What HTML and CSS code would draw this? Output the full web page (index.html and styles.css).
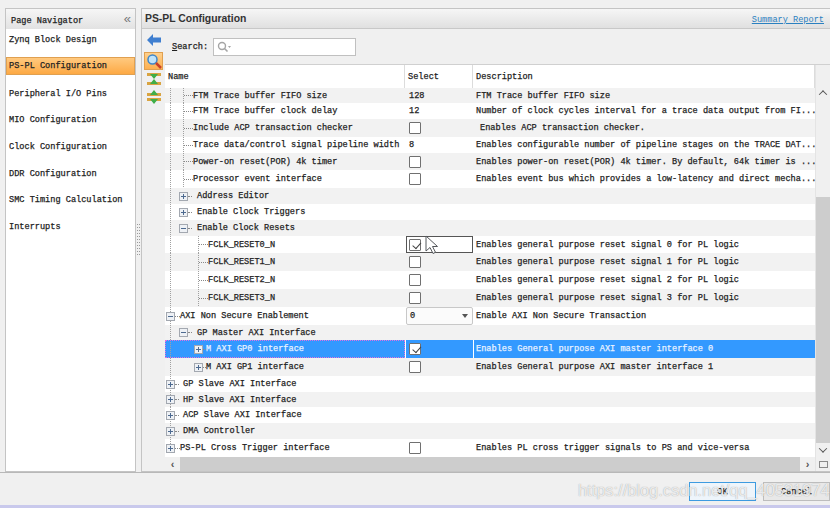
FILE: index.html
```html
<!DOCTYPE html>
<html lang="en">
<head>
  <title>PS-PL Configuration</title>
  <meta charset="UTF-8">
  <link rel="stylesheet" href="styles.css">
</head>
<body>
<svg class="defs" width="0" height="0">
  <symbol id="plus" viewBox="0 0 9 9"><rect x=".5" y=".5" width="8" height="8" fill="#eef1f5" stroke="#a3a8b0"/><path d="M2 4.500h5M4.500 2v5" stroke="#4d6a90"/></symbol>
  <symbol id="minus" viewBox="0 0 9 9"><rect x=".5" y=".5" width="8" height="8" fill="#eef1f5" stroke="#a3a8b0"/><path d="M2 4.500h5" stroke="#4d6a90"/></symbol>
</svg>
<div class="top-strip"></div>
<div class="main">
  <nav class="navigator">
    <div class="nav-head"><span>Page Navigator</span><span class="nav-collapse">&laquo;</span></div>
    <div class="nav-item">Zynq Block Design</div>
    <div class="nav-item active">PS-PL Configuration</div>
    <div class="nav-item">Peripheral I/O Pins</div>
    <div class="nav-item">MIO Configuration</div>
    <div class="nav-item">Clock Configuration</div>
    <div class="nav-item">DDR Configuration</div>
    <div class="nav-item">SMC Timing Calculation</div>
    <div class="nav-item">Interrupts</div>
  </nav>
  <div class="splitter"></div>
  <section class="config">
    <header class="config-head">
      <span class="config-title">PS-PL Configuration</span>
      <a class="summary" href="#">Summary Report</a>
    </header>
    <div class="config-body">
      <aside class="tools">
        <svg width="16" height="14" viewBox="0 0 16 14"><path d="M1 7l6-6v3.500h8v5H7V13z" fill="#3f7fd0"/></svg>
        <span class="tool-on">
          <svg width="16" height="16" viewBox="0 0 16 16"><circle cx="6.500" cy="6.500" r="4.500" fill="#bfe3fa" stroke="#3f86c8" stroke-width="1.500"/><path d="M10 10l5 5" stroke="#c8402a" stroke-width="2.500"/></svg>
        </span>
        <svg width="14" height="14" viewBox="0 0 14 14"><path d="M0 1h14v3H0zM0 10h14v3H0z" fill="#d9a441"/><path d="M3 2h8L7 7zM3 12h8L7 7z" fill="#3fae49"/></svg>
        <svg class="tool-last" width="14" height="14" viewBox="0 0 14 14"><path d="M0 3h14v3H0zM0 8h14v3H0z" fill="#d9a441"/><path d="M7 0l4 5H3zM7 14l4-5H3z" fill="#3fae49"/></svg>
      </aside>
      <div class="content">
        <div class="search-row">
          <label class="search-label"><u>S</u>earch:</label>
          <div class="search-box">
            <svg width="14" height="12" viewBox="0 0 14 12"><circle cx="5" cy="5" r="3.500" fill="none" stroke="#a5a5a5" stroke-width="1.400"/><path d="M7.500 7.500l3 3" stroke="#a5a5a5" stroke-width="1.600"/><path d="M11 5h3l-1.500 2z" fill="#a5a5a5"/></svg>
          </div>
        </div>
        <div class="table-wrap">
          <div class="table">
            <div class="thead">
              <div class="th">Name</div>
              <div class="th">Select</div>
              <div class="th">Description</div>
            </div>
            <div class="tbody">
              <div class="row h15"><div class="name g1 g2 lv2"><i class="stub"></i>FTM Trace buffer FIFO size</div><div class="sel">128</div><div class="desc">FTM Trace buffer FIFO size</div></div>
              <div class="row"><div class="name g1 g2 lv2"><i class="stub"></i>FTM Trace buffer clock delay</div><div class="sel">12</div><div class="desc">Number of clock cycles interval for a trace data output from FI...</div></div>
              <div class="row h18"><div class="name g1 g2 lv2"><i class="stub"></i>Include ACP transaction checker</div><div class="sel"><i class="check"></i></div><div class="desc indent">Enables ACP transaction checker.</div></div>
              <div class="row"><div class="name g1 g2 lv2"><i class="stub"></i>Trace data/control signal pipeline width</div><div class="sel">8</div><div class="desc">Enables configurable number of pipeline stages on the TRACE DAT...</div></div>
              <div class="row h17"><div class="name g1 g2 lv2"><i class="stub"></i>Power-on reset(POR) 4k timer</div><div class="sel"><i class="check"></i></div><div class="desc">Enables power-on reset(POR) 4k timer. By default, 64k timer is ...</div></div>
              <div class="row h18"><div class="name g1 g2 lv2"><i class="stub"></i>Processor event interface</div><div class="sel"><i class="check"></i></div><div class="desc">Enables event bus which provides a low-latency and direct mecha...</div></div>
              <div class="row span"><div class="name g1 lv1"><svg class="tog"><use href="#plus"/></svg><i class="stub short"></i>Address Editor</div><div class="sel"></div><div class="desc"></div></div>
              <div class="row span"><div class="name g1 lv1"><svg class="tog"><use href="#plus"/></svg><i class="stub short"></i>Enable Clock Triggers</div><div class="sel"></div><div class="desc"></div></div>
              <div class="row span"><div class="name g1 lv1"><svg class="tog"><use href="#minus"/></svg><i class="stub short"></i>Enable Clock Resets</div><div class="sel"></div><div class="desc"></div></div>
              <div class="row h17"><div class="name g1 g3 lv3"><i class="stub"></i>FCLK_RESET0_N</div><div class="sel focused"><i class="check on"></i></div><div class="desc">Enables general purpose reset signal 0 for PL logic</div></div>
              <div class="row h18"><div class="name g1 g3 lv3"><i class="stub"></i>FCLK_RESET1_N</div><div class="sel"><i class="check"></i></div><div class="desc">Enables general purpose reset signal 1 for PL logic</div></div>
              <div class="row h18"><div class="name g1 g3 lv3"><i class="stub"></i>FCLK_RESET2_N</div><div class="sel"><i class="check"></i></div><div class="desc">Enables general purpose reset signal 2 for PL logic</div></div>
              <div class="row h18"><div class="name g1 g3 lv3"><i class="stub"></i>FCLK_RESET3_N</div><div class="sel"><i class="check"></i></div><div class="desc">Enables general purpose reset signal 3 for PL logic</div></div>
              <div class="row h18"><div class="name g1 lv0"><svg class="tog"><use href="#minus"/></svg><i class="stub tiny"></i>AXI Non Secure Enablement</div><div class="sel combo"><span>0</span><i class="arrow"></i></div><div class="desc">Enable AXI Non Secure Transaction</div></div>
              <div class="row h15 span"><div class="name g1 lv1"><svg class="tog"><use href="#minus"/></svg><i class="stub short"></i>GP Master AXI Interface</div><div class="sel"></div><div class="desc"></div></div>
              <div class="row h18 selected"><div class="name g1 lv3"><svg class="tog"><use href="#plus"/></svg><i class="stub tiny"></i>M AXI GP0 interface</div><div class="sel"><i class="check on"></i></div><div class="desc">Enables General purpose AXI master interface 0</div></div>
              <div class="row h18"><div class="name g1 lv3"><svg class="tog"><use href="#plus"/></svg><i class="stub tiny"></i>M AXI GP1 interface</div><div class="sel"><i class="check"></i></div><div class="desc">Enables General purpose AXI master interface 1</div></div>
              <div class="row span"><div class="name g1 lv0"><svg class="tog"><use href="#plus"/></svg><i class="stub short"></i>GP Slave AXI Interface</div><div class="sel"></div><div class="desc"></div></div>
              <div class="row h15 span"><div class="name g1 lv0"><svg class="tog"><use href="#plus"/></svg><i class="stub short"></i>HP Slave AXI Interface</div><div class="sel"></div><div class="desc"></div></div>
              <div class="row span"><div class="name g1 lv0"><svg class="tog"><use href="#plus"/></svg><i class="stub short"></i>ACP Slave AXI Interface</div><div class="sel"></div><div class="desc"></div></div>
              <div class="row span"><div class="name g1 lv0"><svg class="tog"><use href="#plus"/></svg><i class="stub short"></i>DMA Controller</div><div class="sel"></div><div class="desc"></div></div>
              <div class="row h18"><div class="name g1-half lv0"><svg class="tog"><use href="#plus"/></svg><i class="stub tiny"></i>PS-PL Cross Trigger interface</div><div class="sel"><i class="check"></i></div><div class="desc">Enables PL cross trigger signals to PS and vice-versa</div></div>
            </div>
            <svg class="cursor" width="14" height="20" viewBox="0 0 14 20"><path d="M1 1v15l4-3.500 3 6 2.500-1.200-3-5.800h5z" fill="#fff" stroke="#55585c"/></svg>
            <div class="hscroll"><span class="sb-btn">&lsaquo;</span><div class="hthumb"></div><span class="sb-btn">&rsaquo;</span></div>
          </div>
          <div class="vscroll">
            <div class="vtop"></div>
            <div class="varrow up"></div>
            <div class="vspace"></div>
            <div class="vthumb"></div>
            <div class="varrow down"></div>
            <div class="corner"><i></i></div>
          </div>
        </div>
      </div>
    </div>
  </section>
</div>
<footer class="footer">
  <button class="btn ok">OK</button>
  <button class="btn">Cancel</button>
</footer>
<div class="bottom-edge"></div>
<div class="watermark">https://blog.csdn.net/qq_40531974</div>
</body>
</html>
```
FILE: styles.css
```css
* {
  box-sizing: border-box;
}
html, body {
  height: 508px;
}
body {
  margin: 0;
  position: relative;
  overflow: hidden;
  display: flex;
  flex-direction: column;
  background: #f0f0f0;
  color: #222;
  font-family: "Liberation Mono", monospace;
  font-size: 8.6px;
  font-weight: 400;
  -webkit-text-stroke: 0.25px #222;
}
.defs {
  position: absolute;
}
.top-strip {
  height: 8px;
  flex: none;
}
.main {
  display: flex;
  height: 464px;
  flex: none;
  padding-left: 5px;
}
.navigator {
  width: 131px;
  border: 1px solid #c4c4c4;
  background: #fff;
}
.nav-head {
  height: 20px;
  display: flex;
  align-items: center;
  justify-content: space-between;
  padding: 3px 4px 0 5px;
  background: linear-gradient(#f6f6f6, #e2e2e2);
}
.nav-collapse {
  font: 13px "Liberation Sans", sans-serif;
  color: #777;
  -webkit-text-stroke: 0;
  margin-top: -4px;
}
.nav-item {
  height: 26.700px;
  padding: 2px 3px 0;
  display: flex;
  align-items: center;
  position: relative;
  top: -3px;
}
.nav-item.active {
  height: 18px;
  margin: 4px 0 4.700px;
  background: linear-gradient(#ffc97f, #fda944);
  border: 1px solid #e0a050;
  padding: 0 2px;
}
.splitter {
  width: 5px;
  margin: 216px 0;
  background: repeating-linear-gradient(#9a9a9a 0 1px, transparent 1px 3px) 1px 0 / 1px 100% no-repeat,
    repeating-linear-gradient(#9a9a9a 0 1px, transparent 1px 3px) 3px 0 / 1px 100% no-repeat;
}
.config {
  flex: 1;
  display: flex;
  flex-direction: column;
  border: 1px solid #c4c4c4;
  border-right: 0;
  min-width: 0;
}
.config-head {
  height: 20px;
  flex: none;
  display: flex;
  align-items: center;
  justify-content: space-between;
  padding: 0 6px 0 3px;
  background: linear-gradient(#f6f6f6, #e0e0e0);
  border-bottom: 1px solid #c8c8c8;
}
.config-title {
  font: bold 10.400px "Liberation Sans", sans-serif;
  -webkit-text-stroke: 0;
  color: #333;
}
.summary {
  color: #2a80c0;
  -webkit-text-stroke: 0;
  text-decoration: underline;
  padding-top: 2px;
}
.config-body {
  flex: 1;
  display: flex;
  min-height: 0;
}
.tools {
  width: 23px;
  flex: none;
  display: flex;
  flex-direction: column;
  align-items: center;
  padding-top: 4px;
}
.tool-on {
  width: 19px;
  height: 18px;
  margin: 5px 0 2px;
  display: flex;
  align-items: center;
  justify-content: center;
  background: linear-gradient(#ffd08c, #fdb050);
  border: 1px solid #e0a050;
}
.tool-last {
  margin-top: 4px;
}
.content {
  flex: 1;
  display: flex;
  flex-direction: column;
  min-width: 0;
}
.search-row {
  height: 36px;
  flex: none;
  display: flex;
  align-items: center;
  gap: 6px;
  padding: 1px 0 0 7px;
  border-bottom: 1px solid #d0d0d0;
}
.search-label {
  width: 35px;
}
.search-box {
  width: 143px;
  height: 18px;
  display: flex;
  align-items: center;
  padding-left: 3px;
  background: #fff;
  border: 1px solid #c0c0c0;
}
.table-wrap {
  flex: 1;
  display: flex;
  min-height: 0;
}
.table {
  width: 650px;
  flex: none;
  display: flex;
  flex-direction: column;
  position: relative;
}
.thead {
  height: 23px;
  flex: none;
  display: grid;
  grid-template-columns: 240px 68px 1fr;
  background: #fff;
}
.th {
  display: flex;
  align-items: center;
  padding: 1px 3px 0;
  border-right: 1px solid #dcdcdc;
}
.tbody {
  flex: none;
  display: flex;
  flex-direction: column;
}
.row {
  height: 16px;
  flex: none;
  display: grid;
  grid-template-columns: 240px 68px 342px;
  background: #fff;
}
.row:nth-child(odd) {
  background: #f2f2f2;
}
.h15 { height: 15px; }
.h17 { height: 17px; }
.h18 { height: 18px; }
.name, .desc, .sel {
  display: flex;
  align-items: center;
  white-space: pre;
  min-width: 0;
}
.name {
  --dots: repeating-linear-gradient(#a0a0a0 0 1px, transparent 1px 2px);
  background-repeat: no-repeat;
}
.g1 {
  background-image: var(--dots);
  background-size: 1px 100%;
  background-position: 5px 0;
}
.g1-half {
  background-image: var(--dots);
  background-size: 1px 50%;
  background-position: 5px 0;
}
.g2 {
  background-image: var(--dots), var(--dots);
  background-size: 1px 100%, 1px 100%;
  background-position: 5px 0, 18px 0;
}
.g3 {
  background-image: var(--dots), var(--dots);
  background-size: 1px 100%, 1px 100%;
  background-position: 5px 0, 33px 0;
}
.lv0 { padding-left: 1px; }
.lv1 { padding-left: 14px; }
.lv2 { padding-left: 19px; }
.lv3 { padding-left: 29px; }
.g3.lv3 { padding-left: 34px; }
.stub {
  width: 9px;
  height: 0;
  flex: none;
  border-top: 1px dotted #888;
}
.stub.short {
  width: 4px;
}
.lv1 .stub.short {
  margin-right: 5px;
}
.lv0 .stub.short {
  margin-right: 4px;
}
.stub.tiny {
  width: 3px;
}
.lv0 .stub.tiny {
  width: 5px;
}
.tog {
  width: 9px;
  height: 9px;
  flex: none;
}
.sel {
  padding-left: 3px;
  margin-left: 1px;
  background: inherit;
}
.desc {
  padding-left: 3px;
}
.desc.indent {
  padding-left: 7px;
}
.check {
  width: 12px;
  height: 12px;
  background: #fff;
  border: 1px solid #707070;
  border-radius: 1px;
  position: relative;
}
.check.on::after {
  content: "";
  position: absolute;
  left: 2px;
  top: 0;
  width: 7px;
  height: 4px;
  border-left: 1.500px solid #444;
  border-bottom: 1.500px solid #444;
  transform: rotate(-48deg) translate(-1px, 2px);
}
.focused {
  border: 1.500px solid #555;
  padding-left: 1.500px;
  background: #fff;
  margin: 0 0 0 1px;
}
.combo {
  margin: 0 0 0 1px;
  padding: 0 4px 0 3px;
  justify-content: space-between;
  background: #fbfbfb;
  border: 1px solid #c8c8c8;
  border-radius: 2px;
}
.arrow {
  width: 0;
  height: 0;
  border: 3.500px solid transparent;
  border-top: 4px solid #555;
  border-bottom: 0;
}
.selected,
.selected:nth-child(odd) {
  background: #fff;
}
.selected .name {
  background-color: #3399ff;
  outline: 1px dotted #e070e0;
  outline-offset: -1px;
  color: #e8f2ff;
  -webkit-text-stroke: 0.25px #e8f2ff;
}
.selected .sel {
  background: #3399ff;
}
.selected .desc {
  background: #3399ff;
  color: #e8f2ff;
  -webkit-text-stroke: 0.25px #e8f2ff;
  margin-left: 1px;
  padding-left: 2px;
}
.cursor {
  position: absolute;
  left: 260px;
  top: 170px;
}
.hscroll {
  height: 14px;
  flex: none;
  display: flex;
  align-items: center;
  background: #f0f0f0;
}
.sb-btn {
  width: 15px;
  flex: none;
  text-align: center;
  font: bold 11px "Liberation Sans", sans-serif;
  color: #555;
  -webkit-text-stroke: 0;
}
.hthumb {
  flex: 1;
  height: 14px;
  background: #cdcdcd;
}
.vscroll {
  flex: 1;
  display: flex;
  flex-direction: column;
  background: #f0f0f0;
  border-left: 1px solid #e4e4e4;
}
.vtop {
  height: 21px;
  flex: none;
}
.varrow {
  height: 14px;
  flex: none;
  display: flex;
  align-items: center;
  justify-content: center;
}
.varrow::after {
  content: "";
  width: 5px;
  height: 5px;
  border-left: 1.500px solid #555;
  border-top: 1.500px solid #555;
  transform: rotate(45deg) translate(1px, 1px);
}
.varrow.down::after {
  transform: rotate(225deg) translate(1px, 1px);
}
.vspace {
  height: 97px;
  flex: none;
}
.vthumb {
  flex: 1;
  background: #cdcdcd;
}
.corner {
  height: 14px;
  flex: none;
  display: flex;
  align-items: center;
  justify-content: center;
}
.corner i {
  width: 9px;
  height: 7px;
  border: 1px solid #8a8a8a;
}
.footer {
  flex: 1;
  display: flex;
  justify-content: flex-end;
  align-items: flex-start;
  gap: 7px;
  padding: 9px 0 0;
  border-top: 1px solid #b8b8b8;
}
.btn {
  width: 67px;
  height: 19px;
  padding: 0;
  font: inherit;
  color: #222;
  background: #e8e8e8;
  border: 1px solid #bdbdbd;
}
.btn.ok {
  border: 1px solid #3d9be0;
  background: #eef5fb;
}
.bottom-edge {
  height: 3px;
  flex: none;
  background: #c9c9ec;
}
.watermark {
  position: absolute;
  left: 578px;
  top: 481px;
  font: 16.400px "Liberation Sans", sans-serif;
  color: rgba(255, 255, 255, 0.8);
  -webkit-text-stroke: 0;
  text-shadow: 0 0 1px rgba(110, 110, 110, 0.7);
  white-space: nowrap;
}
```
